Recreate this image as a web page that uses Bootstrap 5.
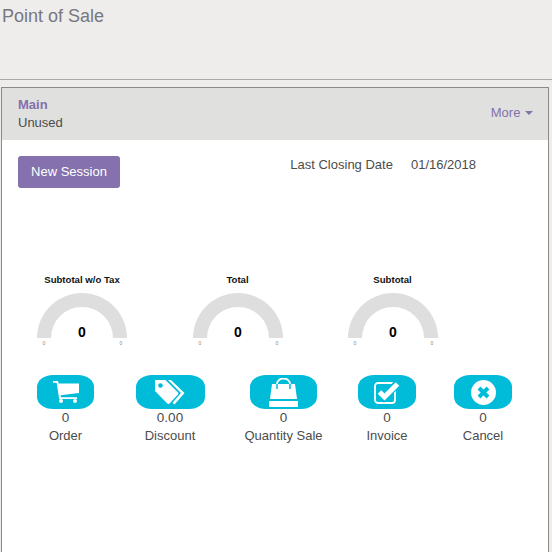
<!DOCTYPE html>
<html lang="en">
<head>
    <meta charset="UTF-8">
    <meta name="viewport" content="width=device-width, initial-scale=1.0">
    <title>Point of Sale</title>
    <link href="https://cdn.jsdelivr.net/npm/bootstrap@5.3.0/dist/css/bootstrap.min.css" rel="stylesheet">
    <style>
        html, body { height: 552px; overflow: hidden; }
        body { background: #eeedeb; color: #4c4c4c; font: 13px/1.3 "Liberation Sans", Arial, sans-serif; }
        .pos-top { height: 80px; border-bottom: 1px solid #a9a9a9; padding: 5px 2px; font-size: 18px; line-height: 22px; color: #77777f; }
        .pos-panel { margin: 7px 3px 0 1px; height: 465px; background: #fff; border: 1px solid #8a8a8a; border-bottom: 0; border-radius: 0; }
        .pos-head { height: 52px; background: #e0e0df; padding: 8px 16px; line-height: 18px; }
        .pos-name { font-weight: 700; color: #8471ad; }
        .pos-more { color: #8471ad; margin-right: -1px; margin-top: -2px; }
        .pos-caret { display: inline-block; margin-left: 1px; border: 4px solid transparent; border-top-color: #8471ad; border-bottom: 0; vertical-align: 2px; }
        .pos-body { padding: 16px 16px 0; }
        .btn-session { background: #8471ad; color: #fff; font-size: 13px; line-height: 18px; width: 102px; height: 32px; padding: 6px 0; border: 0; border-radius: 3px; }
        .btn-session:hover { background: #8471ad; color: #fff; }
        .pos-closing { padding: 0 56px 0 0; line-height: 17px; }
        .pos-closing span + span { margin-left: 18px; }
        .pos-gauges { display: grid; grid-template-columns: 156px 155px 155px; margin: 85px 0 0 -14px; }
        .pos-gauge-title { font-size: 9.6px; font-weight: 700; color: #111; line-height: 14px; text-align: center; margin-bottom: 6px; }
        .pos-gauge { display: block; margin: 0 auto; }
        .pos-stats { display: grid; grid-template-columns: 95px 114px 113px 94px 98px; margin-top: 26px; text-align: center; line-height: 17px; }
        .pos-tile { display: flex; align-items: center; justify-content: center; height: 34px; margin: 0 auto; background: #00bcd8; border-radius: 16px / 12px; }
        .pos-num { margin-bottom: 1px; font-size: 13.5px; }
    </style>
</head>
<body>
<div class="pos-top">Point of Sale</div>
<div class="pos-panel">
    <div class="pos-head d-flex justify-content-between align-items-center">
        <div>
            <div class="pos-name">Main</div>
            <div>Unused</div>
        </div>
        <div class="pos-more">More <span class="pos-caret"></span></div>
    </div>
    <div class="pos-body">
        <div class="d-flex justify-content-between align-items-start">
            <button class="btn btn-session">New Session</button>
            <div class="pos-closing"><span>Last Closing Date</span><span>01/16/2018</span></div>
        </div>
        <div class="pos-gauges">
            <div>
                <div class="pos-gauge-title">Subtotal w/o Tax</div>
                <svg class="pos-gauge" width="90" height="56" viewBox="0 0 90 56"><path d="M0 45a45 45 0 0 1 90 0H76a31 31 0 0 0-62 0z" fill="#dedede"/><text x="45" y="44" text-anchor="middle" font-size="14" font-weight="700" fill="#010101" font-family="Liberation Sans">0</text><text x="7" y="52" text-anchor="middle" font-size="5" fill="#888" font-family="Liberation Sans">0</text><text x="84" y="52" text-anchor="middle" font-size="5" fill="#888" font-family="Liberation Sans">0</text></svg>
            </div>
            <div>
                <div class="pos-gauge-title">Total</div>
                <svg class="pos-gauge" width="90" height="56" viewBox="0 0 90 56"><path d="M0 45a45 45 0 0 1 90 0H76a31 31 0 0 0-62 0z" fill="#dedede"/><text x="45" y="44" text-anchor="middle" font-size="14" font-weight="700" fill="#010101" font-family="Liberation Sans">0</text><text x="7" y="52" text-anchor="middle" font-size="5" fill="#888" font-family="Liberation Sans">0</text><text x="84" y="52" text-anchor="middle" font-size="5" fill="#888" font-family="Liberation Sans">0</text></svg>
            </div>
            <div>
                <div class="pos-gauge-title">Subtotal</div>
                <svg class="pos-gauge" width="90" height="56" viewBox="0 0 90 56"><path d="M0 45a45 45 0 0 1 90 0H76a31 31 0 0 0-62 0z" fill="#dedede"/><text x="45" y="44" text-anchor="middle" font-size="14" font-weight="700" fill="#010101" font-family="Liberation Sans">0</text><text x="7" y="52" text-anchor="middle" font-size="5" fill="#888" font-family="Liberation Sans">0</text><text x="84" y="52" text-anchor="middle" font-size="5" fill="#888" font-family="Liberation Sans">0</text></svg>
            </div>
        </div>
        <div class="pos-stats">
            <div>
                <div class="pos-tile" style="width:57px">
                    <svg width="26" height="22" viewBox="0 0 26 22" fill="#fff"><path d="M0 0h5l.6 2.500H26v9.500L7.600 14.200l.4 2H24v1.800H6.200L3.600 1.800H0z"/><circle cx="8" cy="20" r="2"/><circle cx="22" cy="20" r="2"/></svg>
                </div>
                <div class="pos-num">0</div>
                <div>Order</div>
            </div>
            <div>
                <div class="pos-tile" style="width:69px">
                    <svg width="32" height="25" viewBox="0 0 32 25" fill="#fff"><path d="M2 0h9.500L24 12.500a1.500 1.500 0 0 1 0 2L15.500 23.500a1.500 1.500 0 0 1-2.200 0L1 11V1a1 1 0 0 1 1-1z"/><circle cx="6.500" cy="5.500" r="2.300" fill="#00bcd8"/><path d="M14 0h3l13.500 13-10 11.500-2-1.800L27 13z"/></svg>
                </div>
                <div class="pos-num">0.00</div>
                <div>Discount</div>
            </div>
            <div>
                <div class="pos-tile" style="width:67px">
                    <svg width="29" height="29" viewBox="0 0 29 29" fill="#fff"><path d="M3 6h23l2 15H1z"/><path d="M0 23h29v6H0z"/><path d="M8 6V6a6.500 5.500 0 0 1 13 0" fill="none" stroke="#fff" stroke-width="1.800"/><path d="M8 6v5M21 6v5" fill="none" stroke="#00bcd8" stroke-width="1.500"/></svg>
                </div>
                <div class="pos-num">0</div>
                <div>Quantity Sale</div>
            </div>
            <div>
                <div class="pos-tile" style="width:58px">
                    <svg width="27" height="23" viewBox="0 0 27 23"><rect x="1" y="2" width="20" height="20" rx="3" fill="none" stroke="#fff" stroke-width="1.800"/><path d="M5 11l5 5L23 3" fill="none" stroke="#00bcd8" stroke-width="8"/><path d="M5.500 11l5 5L23.500 3" fill="none" stroke="#fff" stroke-width="5"/></svg>
                </div>
                <div class="pos-num">0</div>
                <div>Invoice</div>
            </div>
            <div>
                <div class="pos-tile" style="width:58px">
                    <svg width="25" height="25" viewBox="0 0 25 25"><circle cx="12.500" cy="12.500" r="12.500" fill="#fff"/><path d="M8 8l9 9M17 8l-9 9" stroke="#00bcd8" stroke-width="4"/></svg>
                </div>
                <div class="pos-num">0</div>
                <div>Cancel</div>
            </div>
        </div>
    </div>
</div>
<script src="https://cdn.jsdelivr.net/npm/bootstrap@5.3.0/dist/js/bootstrap.bundle.min.js"></script>
</body>
</html>
